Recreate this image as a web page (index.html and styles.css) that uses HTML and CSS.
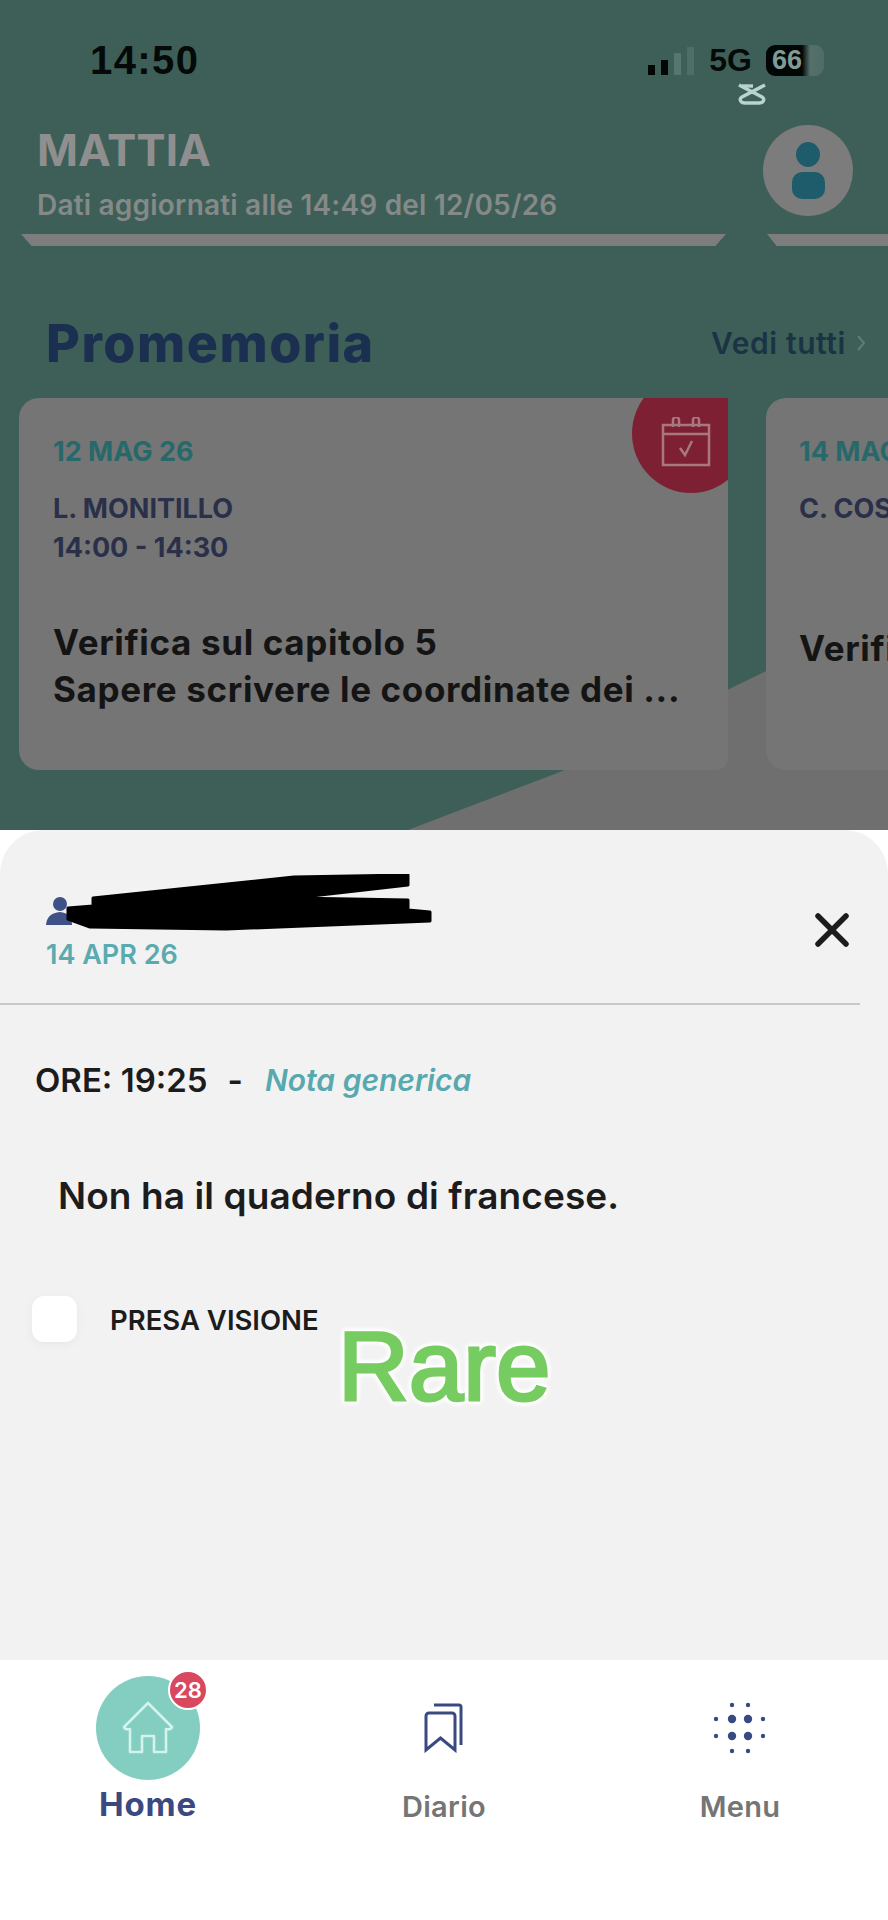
FILE: index.html
```html
<!DOCTYPE html>
<html lang="it">
<head>
    <meta charset="UTF-8">
    <meta name="viewport" content="width=device-width, initial-scale=1.0">
    <title>Nota generica</title>
    <link rel="stylesheet" href="styles.css">
</head>
<body>
    <div class="backdrop">
        <div class="status">
            <span class="time">14:50</span>
            <div class="status-right">
                <div class="signal"><i class="on s1"></i><i class="on s2"></i><i class="s3"></i><i class="s4"></i></div>
                <span class="net">5G</span>
                <span class="battery">66</span>
            </div>
        </div>
        <svg class="watermark" width="28" height="22" viewBox="0 0 28 22" fill="none" stroke="#b9d4cc" stroke-width="3.4">
            <path d="M1 2 L24 14 Q27 16 25 18.500 Q24 20 21 20 H7 Q4 20 3 18.500 Q1 16 4 14 L27 2"/>
            <path d="M4 3 H15"/>
        </svg>

        <div class="head">
            <div>
                <div class="student">MATTIA</div>
                <div class="updated">Dati aggiornati alle 14:49 del 12/05/26</div>
            </div>
            <div class="avatar">
                <span class="avatar-head"></span>
                <span class="avatar-body"></span>
            </div>
        </div>

        <div class="tabs">
            <div class="tab tab-main"></div>
            <div class="tab tab-next"></div>
        </div>

        <div class="section-head">
            <h2>Promemoria</h2>
            <span class="see-all">Vedi tutti
                <svg width="10" height="18" viewBox="0 0 10 18" fill="none" stroke="#5d7d78" stroke-width="2"><path d="M2 2 L8 9 L2 16"/></svg>
            </span>
        </div>

        <div class="cards">
            <div class="card">
                <div class="card-date">12 MAG 26</div>
                <div class="card-who">L. MONITILLO<br>14:00 - 14:30</div>
                <div class="card-title">Verifica sul capitolo 5<br>Sapere scrivere le coordinate dei ...</div>
                <div class="card-flag">
                    <svg width="50" height="50" viewBox="0 0 50 50" fill="none" stroke="#a9777f" stroke-width="2.5">
                        <path d="M2 8 H48 V48 H2 Z"/>
                        <path d="M2 17 H48"/>
                        <path d="M12 10 V3 a3 3 0 0 1 6 0 V10 M32 10 V3 a3 3 0 0 1 6 0 V10"/>
                        <path d="M19 31 L24 38 L31 24"/>
                    </svg>
                </div>
            </div>
            <div class="card card-next">
                <div class="card-date">14 MAG 26</div>
                <div class="card-who">C. COSTA<br>&nbsp;</div>
                <div class="card-title card-title-one">Verifica</div>
            </div>
        </div>
    </div>

    <div class="sheet">
        <div class="sheet-head">
            <div>
                <svg class="person" width="26" height="28" viewBox="0 0 26 28" fill="#3f5288">
                    <circle cx="14" cy="7" r="7"/>
                    <path d="M0 28 Q1 16 14 15 Q26 16 26 28 Z"/>
                </svg>
                <div class="sheet-date">14 APR 26</div>
            </div>
            <svg class="close" width="34" height="34" viewBox="0 0 34 34" fill="none" stroke="#1c1c1c" stroke-width="5.5" stroke-linecap="round">
                <path d="M3 3 L31 31 M31 3 L3 31"/>
            </svg>
        </div>
        <div class="divider"></div>

        <div class="note-meta">
            <span class="note-time">ORE: 19:25</span>
            <span class="note-dash">-</span>
            <span class="note-type">Nota generica</span>
        </div>
        <p class="note-text">Non ha il quaderno di francese.</p>
        <div class="ack">
            <span class="ack-box"></span>
            <span class="ack-label">PRESA VISIONE</span>
        </div>

        <!-- scribble that hides the teacher name -->
        <svg class="scribble" width="380" height="60" viewBox="0 0 380 60" fill="#000" stroke="#000" stroke-width="3" stroke-linejoin="round">
            <path d="M33 24 L234 3 L348 1 L348 11 L234 24 L348 26 L348 36 L370 38 L370 47 L166 55 L30 53 L8 45 L8 34 L33 32 Z"/>
        </svg>
        <div class="rare">Rare</div>
    </div>

    <nav class="nav">
        <div class="nav-item nav-active">
            <div class="nav-icon home-circle">
                <svg width="54" height="54" viewBox="0 0 54 54" fill="none" stroke="#d3f3ec" stroke-width="2.6" stroke-linejoin="round">
                    <path d="M27 2 L51 26 Q50 29 45 28 V51 H33 V35 H21 V51 H9 V28 Q4 29 3 26 Z"/>
                </svg>
                <span class="badge">28</span>
            </div>
            <span class="nav-label">Home</span>
        </div>
        <div class="nav-item">
            <div class="nav-icon">
                <svg width="42" height="50" viewBox="0 0 42 50" fill="none" stroke="#3a4a80" stroke-width="3">
                    <path d="M11 2 H36 a2 2 0 0 1 2 2 V42"/>
                    <path d="M3 47 V13 a3 3 0 0 1 3 -3 H29 a3 3 0 0 1 3 3 V47 L17.5 35 Z"/>
                </svg>
            </div>
            <span class="nav-label">Diario</span>
        </div>
        <div class="nav-item">
            <div class="nav-icon">
                <svg width="56" height="56" viewBox="0 0 56 56" fill="#3a4a80">
                    <circle cx="20" cy="5" r="2.2"/><circle cx="36" cy="5" r="2.2"/>
                    <circle cx="4" cy="19" r="2.2"/><circle cx="20" cy="19" r="4.2"/><circle cx="36" cy="19" r="4.2"/><circle cx="51" cy="19" r="2.2"/>
                    <circle cx="4" cy="36" r="2.2"/><circle cx="20" cy="36" r="4.2"/><circle cx="36" cy="36" r="4.2"/><circle cx="51" cy="36" r="2.2"/>
                    <circle cx="20" cy="51" r="2.2"/><circle cx="36" cy="51" r="2.2"/>
                </svg>
            </div>
            <span class="nav-label">Menu</span>
        </div>
    </nav>
</body>
</html>
```

FILE: styles.css
```css
* {
    box-sizing: border-box;
}

body {
    margin: 0;
    width: 888px;
    height: 1920px;
    overflow: hidden;
    font-family: Inter, "Open Sans", Arial, sans-serif;
    background-color: #fff;
}

/* dimmed home page behind the sheet */
.backdrop {
    position: relative;
    height: 830px;
    background-color: #3e5f58;
    overflow: hidden;
}

.backdrop::before {
    content: "";
    position: absolute;
    inset: 0;
    background-color: #6f6f6f;
    clip-path: polygon(408px 830px, 560px 772px, 764px 672px, 888px 617px, 888px 830px);
}

.backdrop > * {
    position: relative;
}

.status {
    display: flex;
    justify-content: space-between;
    align-items: center;
    height: 80px;
    padding: 40px 64px 0 90px;
    font-family: "Liberation Sans", Arial, sans-serif;
    font-weight: 700;
    color: #050a09;
}

.time {
    font-size: 40px;
    letter-spacing: 1.4px;
}

.status-right {
    display: flex;
    align-items: center;
}

.signal {
    display: flex;
    align-items: flex-end;
    gap: 6px;
    height: 30px;
    margin-right: 15px;
}

.signal i {
    width: 7px;
    background-color: #56766f;
}

.signal .on {
    background-color: #020605;
}

.s1 { height: 10px; }
.s2 { height: 15px; }
.s3 { height: 22px; }
.s4 { height: 28px; background-color: #4d6d66 !important; }

.net {
    font-size: 32px;
    margin-right: 14px;
}

.battery {
    width: 58px;
    height: 31px;
    padding-left: 6px;
    border-radius: 9px;
    font-size: 27px;
    line-height: 31px;
    color: #7f9c96;
    background: linear-gradient(90deg, #020605 62%, #55706a 76%, #4f6c66 100%);
}

.backdrop > .watermark {
    position: absolute;
    left: 738px;
    top: 83px;
}

.head {
    display: flex;
    justify-content: space-between;
    height: 91px;
    margin-top: 45px;
    padding: 0 35px 0 37px;
}

.student {
    font-size: 44px;
    font-weight: 700;
    line-height: 50px;
    color: #8f8f8f;
}

.updated {
    margin-top: 14px;
    font-size: 28px;
    font-weight: 600;
    line-height: 32px;
    letter-spacing: 0.2px;
    color: #858a88;
}

.avatar {
    display: flex;
    flex-direction: column;
    align-items: center;
    gap: 5px;
    width: 90px;
    height: 91px;
    padding-top: 17px;
    border-radius: 50%;
    background-color: #7c7c7c;
}

.avatar-head {
    width: 24px;
    height: 25px;
    border-radius: 50%;
    background-color: #1f5c6b;
}

.avatar-body {
    width: 33px;
    height: 27px;
    border-radius: 10px;
    background-color: #1f5c6b;
}

.tabs {
    display: flex;
    gap: 41px;
    height: 12px;
    margin-top: 18px;
    padding-left: 21px;
}

.tab {
    background-color: #7d7d7d;
    clip-path: polygon(0 0, 100% 0, 98.5% 100%, 1.5% 100%);
}

.tab-main {
    width: 705px;
}

.tab-next {
    flex: 1;
    clip-path: polygon(0 0, 100% 0, 100% 100%, 8% 100%);
}

.section-head {
    display: flex;
    justify-content: space-between;
    align-items: center;
    height: 46px;
    margin-top: 74px;
    padding: 0 22px 0 46px;
}

.section-head h2 {
    margin: 0;
    font-size: 52px;
    font-weight: 800;
    letter-spacing: 1.5px;
    color: #1b2f50;
}

.see-all {
    display: flex;
    align-items: center;
    gap: 10px;
    font-size: 30px;
    font-weight: 600;
    letter-spacing: 0.6px;
    color: #1a3345;
}

.cards {
    display: flex;
    gap: 38px;
    height: 372px;
    margin-top: 32px;
    padding-left: 19px;
}

.card {
    position: relative;
    flex: 0 0 709px;
    padding: 39px 34px 0;
    border-radius: 20px 0 12px 20px;
    background-color: #757575;
    overflow: hidden;
}

.card-next {
    padding-left: 33px;
}

.card-date {
    font-size: 27px;
    font-weight: 700;
    line-height: 30px;
    color: #27696a;
}

.card-who {
    margin-top: 22px;
    font-size: 27px;
    font-weight: 700;
    line-height: 39px;
    color: #2a2f4a;
}

.card-title {
    margin-top: 52px;
    font-size: 35px;
    font-weight: 700;
    line-height: 47px;
    letter-spacing: 0.65px;
    color: #141414;
    white-space: nowrap;
}

.card-title-one {
    margin-top: 58px;
}

.card-flag {
    position: absolute;
    top: -24px;
    right: -22px;
    display: flex;
    align-items: center;
    justify-content: center;
    width: 118px;
    height: 119px;
    padding: 17px 10px 0 0;
    border-radius: 50%;
    background-color: #7d2033;
}

/* note sheet */
.sheet {
    position: relative;
    height: 830px;
    border-radius: 44px 44px 0 0;
    background-color: #f2f2f3;
}

.sheet-head {
    display: flex;
    justify-content: space-between;
    align-items: flex-start;
    height: 173px;
    padding: 67px 39px 0 46px;
}

.person {
    display: block;
}

.sheet-date {
    margin-top: 15px;
    font-size: 27px;
    font-weight: 600;
    line-height: 30px;
    color: #5aabb0;
}

.close {
    margin-top: 16px;
}

.divider {
    width: 860px;
    height: 2px;
    background-color: #c8c8c8;
}

.note-meta {
    display: flex;
    align-items: center;
    height: 40px;
    margin-top: 55px;
    padding-left: 35px;
}

.note-time,
.note-dash {
    font-size: 33px;
    font-weight: 600;
    color: #1c1c1c;
}

.note-dash {
    margin-left: 20px;
}

.note-type {
    margin-left: 22px;
    font-size: 30px;
    font-weight: 600;
    font-style: italic;
    color: #58a9ae;
}

.note-text {
    margin: 72px 0 0;
    padding-left: 58px;
    font-size: 37px;
    font-weight: 600;
    line-height: 48px;
    letter-spacing: 0.1px;
    color: #1c1c1c;
}

.ack {
    display: flex;
    align-items: center;
    gap: 33px;
    margin-top: 76px;
    padding-left: 32px;
}

.ack-box {
    width: 45px;
    height: 46px;
    border-radius: 12px;
    background-color: #fff;
    box-shadow: 0 2px 10px rgba(0, 0, 0, 0.05);
}

.ack-label {
    padding-top: 2px;
    font-size: 27.5px;
    font-weight: 600;
    color: #1c1c1c;
}

.scribble {
    position: absolute;
    left: 60px;
    top: 44px;
}

.rare {
    position: absolute;
    left: 338px;
    top: 481px;
    font-family: "Liberation Sans", Arial, sans-serif;
    font-size: 98px;
    line-height: 110px;
    color: #76cc60;
    -webkit-text-stroke: 3px #76cc60;
    filter: drop-shadow(0 0 2px #fff) drop-shadow(0 0 2px #fff) drop-shadow(0 0 1px #fff);
}

/* bottom tabs */
.nav {
    display: grid;
    grid-template-columns: repeat(3, 1fr);
    height: 260px;
    padding-top: 16px;
    background-color: #fff;
}

.nav-item {
    display: flex;
    flex-direction: column;
    align-items: center;
}

.nav-icon {
    position: relative;
    display: flex;
    align-items: center;
    justify-content: center;
    width: 104px;
    height: 104px;
}

.home-circle {
    border-radius: 50%;
    background-color: #83cdc1;
}

.badge {
    position: absolute;
    top: -6px;
    right: -8px;
    width: 40px;
    height: 40px;
    border: 2px solid #fff;
    border-radius: 50%;
    font-size: 22px;
    font-weight: 600;
    line-height: 36px;
    text-align: center;
    color: #fff;
    background-color: #d9485f;
}

.nav-label {
    margin-top: 10px;
    font-size: 29px;
    font-weight: 600;
    line-height: 34px;
    letter-spacing: 0.3px;
    color: #757575;
}

.nav-active .nav-label {
    margin-top: 7px;
    font-size: 33px;
    font-weight: 700;
    letter-spacing: 0.8px;
    color: #3a4a80;
}
```
